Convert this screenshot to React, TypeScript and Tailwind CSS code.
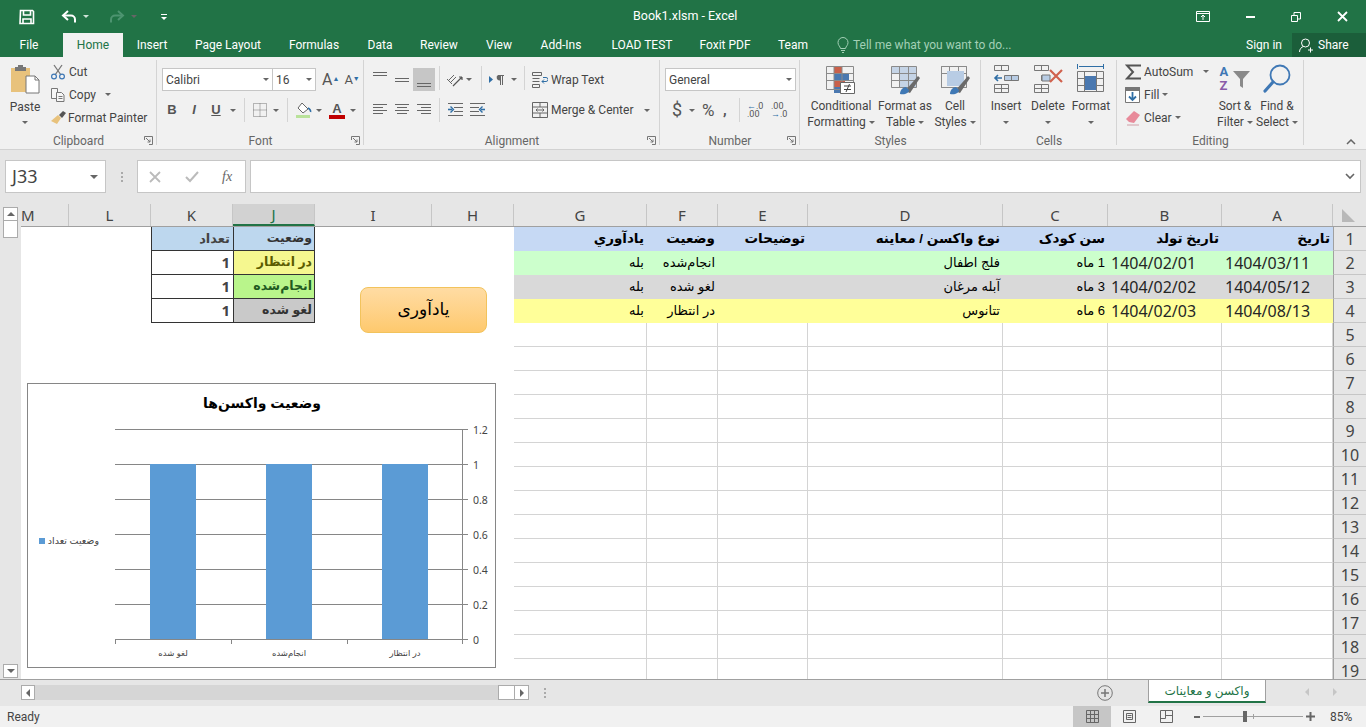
import React, { FC, ReactNode } from 'react'

const ui = { fontFamily: 'Roboto, "Noto Sans", sans-serif' }
const num = { fontFamily: '"Noto Sans", "Open Sans", sans-serif' }
const fa = { fontFamily: '"Liberation Sans", "DejaVu Sans", sans-serif' }

const Caret: FC<{ className?: string }> = ({ className = '' }) => (
  <span className={`inline-block h-0 w-0 border-x-[3px] border-t-[3px] border-x-transparent border-t-[#666] ${className}`} />
)

const Sep = () => <div className="mx-[4px] h-[24px] w-px bg-[#d4d4d4]" />

// title bar icons
const SaveIcon = () => (
  <svg width="16" height="16" viewBox="0 0 16 16" fill="none" stroke="#fff" strokeWidth="1.6">
    <path d="M1.5 1.5h12l1 1v12h-13.5z" />
    <path d="M4.5 2v4h7V2M4 14.5V10h8v4.5" />
  </svg>
)
const UndoIcon: FC<{ dim?: boolean }> = ({ dim }) => (
  <svg width="16" height="14" viewBox="0 0 16 14" fill="none" stroke={dim ? '#4d9470' : '#fff'} strokeWidth="2" className={dim ? '-scale-x-100' : ''}>
    <path d="M7 1 2 5.5 7 10" />
    <path d="M2.5 5.5H10a4 4 0 0 1 4 4v3" />
  </svg>
)

// ribbon small icons
const Lines: FC<{ rows: [number, number, number][] }> = ({ rows }) => (
  <svg width="16" height="16" viewBox="0 0 16 16" fill="none" stroke="#666" strokeWidth="1">
    {rows.map(([x, y, w], i) => (
      <path key={i} d={`M${x} ${y + 0.5}h${w}`} />
    ))}
  </svg>
)

const IndentIcon: FC<{ flip?: boolean }> = ({ flip }) => (
  <svg width="17" height="14" viewBox="0 0 17 14" fill="none" stroke="#666" className={flip ? '-scale-x-100' : ''}>
    <path d="M1 .5h15M7 4.5h9M7 8.5h9M1 12.5h15" />
    <path d="M1 6.5h4" stroke="#2f6ea5" strokeWidth="1.6" />
    <path d="m3.5 3.5 3 3-3 3" stroke="#2f6ea5" strokeWidth="1.4" />
  </svg>
)

const ScissorsIcon = () => (
  <svg width="16" height="16" viewBox="0 0 16 16" fill="none">
    <path d="M4 1 11 11M12 1 5 11" stroke="#777" strokeWidth="1.3" />
    <circle cx="4" cy="12.5" r="2.4" stroke="#3f78b5" strokeWidth="1.2" />
    <circle cx="12" cy="12.5" r="2.4" stroke="#3f78b5" strokeWidth="1.2" />
  </svg>
)
const CopyIcon = () => (
  <svg width="16" height="16" viewBox="0 0 16 16" fill="#f6f6f6" stroke="#777">
    <path d="M1.5 1.5h6v10h-6z" />
    <path d="M6.5 5.5h5l2.5 2.5v6.5h-7.5z" />
    <path d="M8.5 9.5h4M8.5 11.5h4" />
  </svg>
)
const BrushIcon = () => (
  <svg width="17" height="16" viewBox="0 0 17 16">
    <path d="M8 5 11 8 7 14 1 11z" fill="#e8c27c" />
    <path d="m9 5 4-4 3 2-4 5z" fill="#555" />
  </svg>
)
const PasteIcon = () => (
  <svg width="30" height="30" viewBox="0 0 30 30">
    <path d="M1 4h19v24H1z" fill="#e8c27c" />
    <path d="M5 3h11v4H5z" fill="#777" />
    <path d="M8 1h5v3H8z" fill="#777" />
    <path d="M16 12h9l4 4v13H16z" fill="#fff" stroke="#777" />
    <path d="M25 12v4h4" fill="none" stroke="#777" />
  </svg>
)
const BordersIcon = () => (
  <svg width="14" height="14" viewBox="0 0 14 14" fill="none" stroke="#777" strokeDasharray="1 1">
    <path d="M.5.5h13v13H.5zM7 .5v13M.5 7h13" />
  </svg>
)
const FillIcon = () => (
  <svg width="16" height="16" viewBox="0 0 16 16" fill="none">
    <path d="m6 1 6 6-5 4-5-5z" fill="#fff" stroke="#666" />
    <path d="M12 6c2 1 3 3 2.5 4" stroke="#2f6ea5" strokeWidth="1.6" />
    <path d="M0 13h14v3H0z" fill="#b9e29a" />
  </svg>
)
const OrientIcon = () => (
  <svg width="18" height="16" viewBox="0 0 18 16" fill="none" stroke="#666">
    <path d="M2 9l6-6M4 11l6-6M1 7l5 5" />
    <path d="M7 14 16 5M16 5h-3M16 5v3" stroke="#555" strokeWidth="1.2" />
  </svg>
)
const RtlIcon = () => (
  <svg width="16" height="12" viewBox="0 0 16 12">
    <path d="M0 2v7l4-3.5z" fill="#2f6ea5" />
    <path d="M9 1h6v1h-1v9h-1V2h-1v9h-1V6.500A3 3 0 0 1 9 1z" fill="#666" />
  </svg>
)
const WrapIcon = () => (
  <svg width="16" height="16" viewBox="0 0 16 16" fill="none" stroke="#666">
    <path d="M.5.5h9v3h-9zM.5 6.500h7M.5 9.500h7M.5 12.500h7v3h-7z" />
    <path d="M10 9.500h4a1.500 1.500 0 0 0 0-4H11" stroke="#2f6ea5" />
    <path d="m12 7.500-2 2 2 2" stroke="#2f6ea5" />
  </svg>
)
const MergeIcon = () => (
  <svg width="16" height="16" viewBox="0 0 16 16" fill="none" stroke="#666">
    <path d="M.5.5h15v15H.5zM.5 5h15M.5 11h15M4 8h8M5.500 6.500 4 8l1.500 1.500M10.500 6.500 12 8l-1.500 1.500M8 .5V5M8 11v4.500" />
  </svg>
)

// ribbon large icons
const Grid5: FC<{ fill?: ReactNode }> = ({ fill }) => (
  <g>
    {fill}
    <path d="M3.500 3.500h25v21h-25zM3.500 10.500h25M3.500 17.500h25M11.500 3.500v21M20.500 3.500v21" fill="none" stroke="#8a8a8a" />
  </g>
)
const PaintBrush = () => (
  <g>
    <path d="M17 28 30 13l2 2-10 15z" fill="#6a6a6a" />
    <path d="M12 31c0-4 3-7 6-7l3 3c0 3-4 5-9 4z" fill="#3f78b5" />
  </g>
)
const CondIcon = () => (
  <svg width="32" height="32" viewBox="0 0 32 32">
    <path d="M9 3h8v7H9z" fill="#c9604a" />
    <path d="M9 10h15v7H9z" fill="#4a78b0" />
    <path d="M9 17h11v7H9z" fill="#c9604a" />
    <path d="M9 24h6v6H9z" fill="#4a78b0" />
    <path d="M1.500 3.500h27v23h-27zM1.500 10.500h27M1.500 17.500h27M9 3.500v23M17 3.500v23" fill="none" stroke="#8a8a8a" />
    <path d="M15.500 19.500h14v11h-14z" fill="#fff" stroke="#666" />
    <path d="M19 23h7M19 26.500h7M24.500 21l-3.500 8" fill="none" stroke="#444" />
  </svg>
)
const TableIcon = () => (
  <svg width="34" height="32" viewBox="0 0 34 32">
    <Grid5 fill={<path d="M3.500 3.500h25v7h-25z M11.500 10.500h17v14h-17z" fill="#c5d4e6" />} />
    <PaintBrush />
  </svg>
)
const StylesIcon = () => (
  <svg width="34" height="32" viewBox="0 0 34 32">
    <path d="M3.500 3.500h25v21h-25zM3.500 10.500h25M11.500 3.500v7M20.500 3.500v7" fill="none" stroke="#8a8a8a" />
    <path d="M9 8h17v15H9z" fill="#b8cce4" />
    <path d="M3.500 3.500h25v21h-25z" fill="none" stroke="#8a8a8a" />
    <PaintBrush />
  </svg>
)
const InsertIcon = () => (
  <svg width="28" height="30" viewBox="0 0 28 30" fill="none" stroke="#777">
    <path d="M2.500 1.500h14v5h-14zM9.500 1.500v5M2.500 20.500h14v8h-14zM9.500 20.500v8M2.500 24.500h14" />
    <path d="M12.500 11.500h14v5h-14zM19.500 11.500v5" fill="#b8cce4" />
    <path d="M10 14H3M6 11l-3 3 3 3" stroke="#2f6ea5" strokeWidth="1.6" />
  </svg>
)
const DeleteIcon = () => (
  <svg width="32" height="30" viewBox="0 0 32 30" fill="none" stroke="#777">
    <path d="M2.500 1.500h14v5h-14zM9.500 1.500v5M2.500 20.500h14v8h-14zM9.500 20.500v8M2.500 24.500h14M9.500 11.500h8v5h-8z" />
    <path d="M10 11h8v6h-8z" fill="#b8cce4" />
    <path d="m18 6 12 12M30 6 18 18" stroke="#d0614d" strokeWidth="2.2" />
  </svg>
)
const FormatIcon = () => (
  <svg width="30" height="32" viewBox="0 0 30 32" fill="none" stroke="#777">
    <path d="M1.500 1v5M27.500 1v5M3 3.500h24" stroke="#2f6ea5" />
    <path d="M1.500 8.500h26v20h-26zM8.500 8.500v20M20.500 8.500v20M1.500 15.500h26M1.500 22.500h26" />
    <path d="M9 13h11v14H9z" fill="#4a78b0" stroke="none" />
  </svg>
)
const SigmaIcon = () => (
  <svg width="16" height="16" viewBox="0 0 16 16" fill="none" stroke="#555" strokeWidth="2">
    <path d="M15 2.500V1.500H2l6 6.500-6 6.500h13v-1" />
  </svg>
)
const FillDownIcon = () => (
  <svg width="16" height="16" viewBox="0 0 16 16" fill="none">
    <path d="M.5.5h14v15H.5z" fill="#fff" stroke="#777" />
    <path d="M.5.5h14v3H.5z" fill="#777" stroke="#777" />
    <path d="M7.500 5v8M4 9.500l3.500 3.500L11 9.500" stroke="#2f6ea5" strokeWidth="1.8" />
  </svg>
)
const EraserIcon = () => (
  <svg width="16" height="16" viewBox="0 0 16 16">
    <path d="m9 1 6 4-6 8-5-1-3-3z" fill="#e88a9a" />
    <path d="M2 15h12" stroke="#d0a0a8" />
  </svg>
)
const SortFilterIcon = () => (
  <div className="flex items-center">
    <div className="flex w-[12px] flex-col text-[13px] leading-[14px] font-bold">
      <span className="text-[#3f78b5]">A</span>
      <span className="text-[#8a5ca8]">Z</span>
    </div>
    <svg width="19" height="20" viewBox="0 0 19 20"><path d="M1 2h17l-7 8v9l-3-2v-7z" fill="#8a8a8a" /></svg>
  </div>
)
const SearchIcon = () => (
  <svg width="32" height="32" viewBox="0 0 32 32" fill="none">
    <circle cx="19" cy="12" r="9.500" stroke="#3f78b5" strokeWidth="1.8" />
    <path d="m12 19-8 9" stroke="#3f78b5" strokeWidth="3.2" strokeLinecap="round" />
  </svg>
)

const Launcher = () => (
  <svg width="9" height="9" viewBox="0 0 9 9" fill="none" stroke="#777" className="absolute right-[4px] bottom-[4px]">
    <path d="M.5 4V.5H8.500V8.500H5" />
    <path d="M2 2l4 4M3.500 6H6V3.500" />
  </svg>
)

const Group: FC<{ className: string; label: string; launcher?: boolean; children: ReactNode }> = ({ className, label, launcher, children }) => (
  <div className={`relative mt-[3px] flex h-[89px] shrink-0 flex-col ${className}`}>
    <div className="flex-1">{children}</div>
    <div className="text-center text-[12px] leading-[16px] text-[#666]">{label}</div>
    {launcher && <Launcher />}
    <span className="absolute top-0 right-0 h-[85px] w-px bg-[#d4d4d4]" />
  </div>
)

const BigBtn: FC<{ className: string; icon: ReactNode; top: string; bottom: string; caret?: boolean }> = ({ className, icon, top, bottom, caret = true }) => (
  <div className={`flex flex-col items-center text-[12px] leading-[16px] text-[#444] ${className}`}>
    <div className="flex h-[38px] items-center justify-center">{icon}</div>
    <span className="whitespace-nowrap">{top}</span>
    <span className="flex h-[16px] items-center gap-[3px] whitespace-nowrap">
      {bottom}
      {caret && <Caret />}
    </span>
  </div>
)

const Ribbon = () => (
  <div className="flex h-[93px] shrink-0 border-b border-[#d2d2d2] bg-[#f1f1f1]">
    <Group className="w-[157px]" label="Clipboard" launcher>
      <div className="flex">
        <div className="flex w-[50px] flex-col items-center text-[12px] text-[#444]">
          <div className="mt-[4px] h-[30px]"><PasteIcon /></div>
          <span className="mt-[5px] leading-[16px]">Paste</span>
          <Caret className="mt-[6px]" />
        </div>
        <div className="flex flex-col text-[12px] text-[#444]">
          <div className="flex h-[23px] items-center gap-[3px]"><ScissorsIcon />Cut</div>
          <div className="flex h-[23px] items-center gap-[3px]"><CopyIcon />Copy<Caret className="ml-[6px]" /></div>
          <div className="flex h-[23px] items-center gap-[1px] whitespace-nowrap"><BrushIcon />Format Painter</div>
        </div>
      </div>
    </Group>

    <Group className="w-[207px]" label="Font" launcher>
      <div className="flex items-center pt-[8px] pl-[5px]">
        <div className="flex h-[23px] w-[111px] items-center justify-between border border-[#c6c6c6] bg-white px-[3px] text-[12px] text-[#444]">Calibri<Caret /></div>
        <div className="flex h-[23px] w-[43px] items-center justify-between border border-l-0 border-[#c6c6c6] bg-white px-[3px] text-[12px] text-[#444]">16<Caret /></div>
        <span className="ml-[6px] text-[16px] leading-none text-[#555]">A<sup className="text-[7px] text-[#2f6ea5]">▲</sup></span>
        <span className="ml-[5px] text-[13px] leading-none text-[#555]">A<sup className="text-[7px] text-[#2f6ea5]">▼</sup></span>
      </div>
      <div className="mt-[8px] flex h-[22px] items-center pl-[4px] text-[13px] text-[#555]">
        <span className="w-[22px] text-center font-bold" style={fa}>B</span>
        <span className="w-[22px] text-center font-bold italic" style={fa}>I</span>
        <span className="w-[22px] text-center font-bold underline" style={fa}>U</span>
        <Caret className="mr-[4px] ml-[3px]" />
        <Sep />
        <span className="ml-[4px] flex w-[20px]"><BordersIcon /></span>
        <Caret className="mr-[4px]" />
        <Sep />
        <span className="ml-[4px] w-[20px]"><FillIcon /></span>
        <Caret />
        <span className="ml-[5px] flex w-[20px] flex-col items-center font-bold leading-[13px]" style={fa}>A<span className="h-[4px] w-[16px] bg-[#c00000]" /></span>
        <Caret className="ml-[3px]" />
      </div>
    </Group>

    <Group className="w-[296px]" label="Alignment" launcher>
      <div className="flex">
        <div className="flex w-[165px] shrink-0 flex-col">
          <div className="flex h-[31px] items-end pl-[5px]">
            <span className="flex h-[23px] w-[22px] items-start justify-center pt-[3px]"><Lines rows={[[1, 1, 14], [1, 4, 14]]} /></span>
            <span className="flex h-[23px] w-[22px] items-center justify-center"><Lines rows={[[1, 6, 14], [1, 9, 14]]} /></span>
            <span className="flex h-[23px] w-[22px] items-end justify-center bg-[#c6c6c6] pb-[2px]"><Lines rows={[[1, 10, 14], [1, 13, 14]]} /></span>
            <div className="mb-[1px]"><Sep /></div>
            <span className="ml-[2px] flex h-[23px] w-[20px] items-center"><OrientIcon /></span>
            <Caret className="mb-[10px]" />
            <div className="mb-[1px] ml-[5px]"><Sep /></div>
            <span className="ml-[3px] flex h-[23px] w-[22px] items-center"><RtlIcon /></span>
            <Caret className="mb-[10px]" />
            <div className="mb-[1px] ml-[3px]"><Sep /></div>
          </div>
          <div className="mt-[8px] flex h-[22px] items-center pl-[5px]">
            <span className="flex w-[22px] justify-center"><Lines rows={[[1, 2, 14], [1, 5, 10], [1, 8, 14], [1, 11, 10]]} /></span>
            <span className="flex w-[22px] justify-center"><Lines rows={[[1, 2, 14], [3, 5, 10], [1, 8, 14], [3, 11, 10]]} /></span>
            <span className="flex w-[22px] justify-center"><Lines rows={[[1, 2, 14], [5, 5, 10], [1, 8, 14], [5, 11, 10]]} /></span>
            <Sep />
            <span className="ml-[3px] flex w-[22px]"><IndentIcon /></span>
            <IndentIcon flip />
          </div>
        </div>
        <div className="flex flex-col pl-[3px] text-[12px] text-[#444]">
          <div className="mt-[8px] flex h-[23px] items-center gap-[3px] whitespace-nowrap"><WrapIcon />Wrap Text</div>
          <div className="mt-[8px] flex h-[22px] items-center gap-[3px] whitespace-nowrap"><MergeIcon />Merge &amp; Center<Caret className="ml-[8px]" /></div>
        </div>
      </div>
    </Group>

    <Group className="w-[140px]" label="Number" launcher>
      <div className="pt-[8px] pl-[5px]">
        <div className="flex h-[23px] w-[131px] items-center justify-between border border-[#c6c6c6] bg-white px-[3px] text-[12px] text-[#444]">General<Caret /></div>
      </div>
      <div className="mt-[8px] flex h-[22px] items-center pl-[12px] text-[#555]">
        <span className="w-[10px] text-[18px] leading-none">$</span>
        <Caret className="ml-[7px]" />
        <span className="ml-[7px] w-[15px] text-[17px] leading-none">%</span>
        <span className="ml-[6px] w-[6px] text-[15px] leading-none font-bold">,</span>
        <div className="ml-[6px]"><Sep /></div>
        <span className="ml-[3px] w-[24px] text-[9px] leading-[8px]"><span className="text-[#2f6ea5]">←</span>.0<br />.00</span>
        <span className="w-[20px] text-[9px] leading-[8px]">.00<br /><span className="text-[#2f6ea5]">→</span>.0</span>
      </div>
    </Group>

    <Group className="w-[181px]" label="Styles">
      <div className="flex">
        <BigBtn className="w-[81px] pl-[1px]" icon={<CondIcon />} top="Conditional" bottom="Formatting" />
        <BigBtn className="w-[48px]" icon={<TableIcon />} top="Format as" bottom="Table" />
        <BigBtn className="w-[52px]" icon={<StylesIcon />} top="Cell" bottom="Styles" />
      </div>
    </Group>

    <Group className="w-[136px]" label="Cells">
      <div className="flex pl-[4px]">
        <BigBtn className="w-[42px]" icon={<InsertIcon />} top="Insert" bottom="" />
        <BigBtn className="w-[42px]" icon={<DeleteIcon />} top="Delete" bottom="" />
        <BigBtn className="w-[44px]" icon={<FormatIcon />} top="Format" bottom="" />
      </div>
    </Group>

    <Group className="w-[187px]" label="Editing">
      <div className="flex pl-[8px]">
        <div className="flex w-[89px] flex-col text-[12px] text-[#444]">
          <div className="flex h-[23px] items-center gap-[3px]"><SigmaIcon />AutoSum<Caret className="ml-[7px]" /></div>
          <div className="flex h-[23px] items-center gap-[3px]"><FillDownIcon />Fill<Caret /></div>
          <div className="flex h-[23px] items-center gap-[3px]"><EraserIcon />Clear<Caret /></div>
        </div>
        <BigBtn className="w-[42px]" icon={<SortFilterIcon />} top="Sort &" bottom="Filter" />
        <BigBtn className="w-[42px]" icon={<SearchIcon />} top="Find &" bottom="Select" />
      </div>
    </Group>

    <div className="flex flex-1 items-end justify-end pr-[10px] pb-[4px]">
      <svg width="10" height="6" viewBox="0 0 10 6" fill="none" stroke="#666" strokeWidth="1.5"><path d="m1 5 4-4 4 4" /></svg>
    </div>
  </div>
)

const tabs: [string, string][] = [
  ['File', 'w-[63px] pr-[5px]'],
  ['Home', 'w-[60px]'],
  ['Insert', 'w-[58px]'],
  ['Page Layout', 'w-[94px]'],
  ['Formulas', 'w-[78px]'],
  ['Data', 'w-[54px]'],
  ['Review', 'w-[64px]'],
  ['View', 'w-[56px]'],
  ['Add-Ins', 'w-[68px]'],
  ['LOAD TEST', 'w-[94px]'],
  ['Foxit PDF', 'w-[72px]'],
  ['Team', 'w-[64px]'],
]

const TitleBar = () => (
  <div className="shrink-0 bg-[#217346] text-white">
    <div className="flex h-[33px] items-center">
      <div className="flex w-[633px] items-center pl-[19px]">
        <SaveIcon />
        <span className="ml-[26px]"><UndoIcon /></span>
        <Caret className="ml-[6px] border-t-[#cfe3d8]" />
        <span className="ml-[20px]"><UndoIcon dim /></span>
        <Caret className="ml-[6px] border-t-[#4d9470]" />
        <span className="ml-[24px] flex flex-col items-center gap-[2px]">
          <span className="h-[1px] w-[6px] bg-white" />
          <Caret className="border-t-white" />
        </span>
      </div>
      <span className="text-[12.5px]">Book1.xlsm - Excel</span>
      <div className="ml-auto flex items-center">
        <svg width="14" height="12" viewBox="0 0 14 12" fill="none" stroke="#fff" className="mr-[36px]"><path d="M.5.5h13v10H.5zM.5 2.500h13M7 9V4M5 6l2-2 2 2" /></svg>
        <span className="mr-[36px] h-[2px] w-[9px] bg-white" />
        <svg width="10" height="10" viewBox="0 0 10 10" fill="none" stroke="#fff" className="mr-[36px]"><path d="M.5 3.500h6v6h-6zM3 3V.5h6.500V7H7" /></svg>
        <svg width="11" height="11" viewBox="0 0 11 11" fill="none" stroke="#fff" strokeWidth="1.8" className="mr-[18px]"><path d="m1 1 9 9M10 1l-9 9" /></svg>
      </div>
    </div>
    <div className="flex h-[24px] items-stretch text-[12px]">
      {tabs.map(([name, w]) => (
        <div key={name} className={`flex items-center justify-center ${w} ${name === 'Home' ? 'bg-[#f1f1f1] text-[#217346]' : ''}`}>{name}</div>
      ))}
      <div className="ml-[11px] flex items-center gap-[3px] text-[#a3d0b6]">
        <svg width="14" height="16" viewBox="0 0 14 16" fill="none" stroke="#a3d0b6"><path d="M4.500 11.500C4 9 2 8.500 2 5.500a5 5 0 0 1 10 0c0 3-2 3.500-2.500 6zM5 13.500h4M6 15.500h2" /></svg>
        Tell me what you want to do...
      </div>
      <div className="ml-auto flex items-center pr-[10px]">Sign in</div>
      <div className="flex w-[74px] items-center gap-[5px] bg-[#1b5e3a] pl-[7px]">
        <svg width="14" height="15" viewBox="0 0 14 15" fill="none" stroke="#fff"><circle cx="6.500" cy="5" r="4" /><path d="M.5 14c0-3 2-5 4-5.500M9 12h5M11.500 9.500v5" /></svg>
        Share
      </div>
    </div>
  </div>
)

const FormulaBar = () => (
  <div className="flex h-[54px] shrink-0 items-start bg-[#e6e6e6] pt-[10px]">
    <div className="ml-[5px] flex h-[33px] w-[101px] items-center justify-between border border-[#c6c6c6] bg-white pr-[7px] pl-[6px] text-[18px] text-[#444]" style={num}>J33<Caret className="border-x-[4px] border-t-[4px]" /></div>
    <div className="ml-[15px] flex h-[33px] w-[2px] flex-col items-center justify-center gap-[2px]">
      <span className="h-[2px] w-[2px] bg-[#aaa]" />
      <span className="h-[2px] w-[2px] bg-[#aaa]" />
      <span className="h-[2px] w-[2px] bg-[#aaa]" />
    </div>
    <div className="ml-[14px] flex h-[33px] w-[109px] items-center border border-[#c6c6c6] bg-white pl-[11px] text-[#aaa]">
      <svg width="12" height="12" viewBox="0 0 12 12" fill="none" stroke="#bbb" strokeWidth="1.8"><path d="m1 1 10 10M11 1 1 11" /></svg>
      <svg width="14" height="12" viewBox="0 0 14 12" fill="none" stroke="#bbb" strokeWidth="2" className="ml-[24px]"><path d="m1 6 4 4 8-9" /></svg>
      <span className="ml-[23px] text-[14px] text-[#666] italic" style={{ fontFamily: '"Liberation Serif", serif' }}>fx</span>
    </div>
    <div className="ml-[4px] flex h-[33px] w-[1111px] items-center justify-end border border-[#c6c6c6] bg-white pr-[5px]">
      <svg width="10" height="7" viewBox="0 0 10 7" fill="none" stroke="#666" strokeWidth="1.6"><path d="m1 1 4 4 4-4" /></svg>
    </div>
  </div>
)

const columnLetters = ['M', 'L', 'K', 'J', 'I', 'H', 'G', 'F', 'E', 'D', 'C', 'B', 'A']
const gridCols = 'grid grid-cols-[48px_82px_82px_82px_117px_82px_133px_71px_90px_195px_105px_114px_111px_33px]'

// G F E D C B A, from the left
const rowsData: { bg: string; bold?: boolean; cells: string[] }[] = [
  { bg: 'bg-[#c6d9f4]', bold: true, cells: ['يادآوري', 'وضعیت', 'توضیحات', 'نوع واکسن / معاینه', 'سن کودک', 'تاریخ تولد', 'تاریخ'] },
  { bg: 'bg-[#ccffcc]', cells: ['بله', 'انجام‌شده', '', 'فلج اطفال', '1 ماه', '1404/02/01', '1404/03/11'] },
  { bg: 'bg-[#d9d9d9]', cells: ['بله', 'لغو شده', '', 'آبله مرغان', '3 ماه', '1404/02/02', '1404/05/12'] },
  { bg: 'bg-[#ffff99]', cells: ['بله', 'در انتظار', '', 'تتانوس', '6 ماه', '1404/02/03', '1404/08/13'] },
]

const sideTable: { k: string; j: string; kBg: string; jBg: string }[] = [
  { k: 'تعداد', j: 'وضعیت', kBg: 'bg-[#bdd7ee]', jBg: 'bg-[#bdd7ee] text-[#333]' },
  { k: '1', j: 'در انتظار', kBg: 'bg-white', jBg: 'bg-[#f5f78f] text-[#5c5c00]' },
  { k: '1', j: 'انجام‌شده', kBg: 'bg-white', jBg: 'bg-[#b9f58b] text-[#1f5a1f]' },
  { k: '1', j: 'لغو شده', kBg: 'bg-white', jBg: 'bg-[#c9c9c9] text-[#333]' },
]

const isDate = (s: string) => s.startsWith('1404')

const Sheet = () => (
  <div className={`${gridCols} auto-rows-[24px]`}>
    {Array.from({ length: 19 }).map((_, r) => {
      const data = rowsData[r]
      const side = sideTable[r]
      return (
        <React.Fragment key={r}>
          <div className="bg-white" />
          <div className="bg-white" />
          {side ? (
            <>
              <div className={`flex items-center justify-end border-b border-l border-[#333] pr-[3px] text-[13px] font-bold text-[#444] ${side.kBg}`} style={r === 0 ? fa : { ...num, fontSize: 15 }}>{side.k}</div>
              <div className={`flex items-center justify-start whitespace-nowrap border-x border-b border-[#333] pr-[2px] text-[12.5px] font-bold ${side.jBg}`} style={fa} dir="rtl">{side.j}</div>
            </>
          ) : (
            <>
              <div className="bg-white" />
              <div className="bg-white" />
            </>
          )}
          <div className="bg-white" />
          <div className="bg-white" />
          {data
            ? data.cells.map((text, c) => (
                <div
                  key={c}
                  dir={isDate(text) ? 'ltr' : 'rtl'}
                  style={isDate(text) ? { ...num, fontSize: 16 } : fa}
                  className={`flex items-center whitespace-nowrap px-[3px] ${isDate(text) ? 'text-[#262626]' : 'text-black'} ${data.bg} ${data.bold ? 'text-[13.5px] font-bold' : 'text-[13px]'}`}
                >
                  {text}
                </div>
              ))
            : Array.from({ length: 7 }).map((_, c) => <div key={c} className="border-r border-b border-[#d4d4d4] bg-white" />)}
          <div className="flex items-center justify-center border-b border-l border-[#c6c6c6] border-l-[#a0a0a0] bg-[#e6e6e6] text-[16px] text-[#444]" style={num}>{r + 1}</div>
        </React.Fragment>
      )
    })}
  </div>
)

const Chart = () => {
  const ticks = ['1.2', '1', '0.8', '0.6', '0.4', '0.2', '0']
  const bars: [number, string][] = [[150, 'لغو شده'], [266, 'انجام‌شده'], [382, 'در انتظار']]
  return (
    <div className="absolute top-[156px] left-[6px] h-[285px] w-[469px] border border-[#868686] bg-white">
      <svg width="467" height="283" viewBox="28 384 467 283" style={fa}>
        <text x="262" y="408" fontSize="14" fontWeight="700" textAnchor="middle" direction="rtl" fill="#000">وضعیت واکسن‌ها</text>
        {ticks.map((t, i) => (
          <g key={t}>
            <path d={`M115 ${429.5 + i * 35}h353`} stroke="#868686" />
            <text x="473" y={433.5 + i * 35} fontSize="10.5" fill="#444" style={num}>{t}</text>
          </g>
        ))}
        <path d="M462.500 429v210M115.500 639v5M231.500 639v5M347.500 639v5M462.500 639v5" stroke="#868686" />
        {bars.map(([x, name]) => (
          <g key={x}>
            <rect x={x} y="464" width="46" height="175" fill="#5b9bd5" />
            <text x={x + 23} y="656" fontSize="8.5" textAnchor="middle" direction="rtl" fill="#444">{name}</text>
          </g>
        ))}
        <rect x="39" y="538" width="6" height="6" fill="#5b9bd5" />
        <text x="99" y="544" fontSize="9.5" textAnchor="start" direction="rtl" fill="#444">وضعیت تعداد</text>
      </svg>
    </div>
  )
}

const ScrollBtn: FC<{ children: ReactNode; className?: string }> = ({ children, className = '' }) => (
  <div className={`flex items-center justify-center border border-[#ababab] bg-white ${className}`}>{children}</div>
)

const Tri: FC<{ d: 'u' | 'd' | 'l' | 'r'; c?: string }> = ({ d, c = '#666' }) => {
  const p = { u: 'M0 6 4 2l4 4z', d: 'M0 2l4 4 4-4z', l: 'M6 0 2 4l4 4z', r: 'M2 0l4 4-4 4z' }[d]
  return <svg width="8" height="8" viewBox="0 0 8 8" fill={c}><path d={p} /></svg>
}

const Workspace = () => (
  <div className="flex min-h-0 flex-1">
    <div className="flex w-[21px] shrink-0 flex-col items-center bg-[#e6e6e6] px-[3px] pt-[3px] pb-[1px]">
      <ScrollBtn className="h-[14px] w-[15px]"><Tri d="u" /></ScrollBtn>
      <div className="h-[17px] w-[15px] border border-t-0 border-[#ababab] bg-white" />
      <div className="flex-1" />
      <ScrollBtn className="h-[14px] w-[15px]"><Tri d="d" /></ScrollBtn>
    </div>
    <div className="flex min-w-0 flex-1 flex-col">
      <div className={`${gridCols} h-[23px] shrink-0 border-b border-[#a0a0a0] bg-[#e6e6e6]`} style={num}>
        {columnLetters.map(l => (
          <div
            key={l}
            className={`flex items-center justify-center border-r border-[#c6c6c6] text-[15px] leading-none ${l === 'J' ? 'border-b-2 border-b-[#217346] bg-[#d2d2d2] text-[#217346]' : 'text-[#444]'} ${l === 'M' ? 'justify-start' : ''}`}
          >
            {l}
          </div>
        ))}
        <div className="flex items-end justify-center pr-[4px] pb-[3px]">
          <svg width="16" height="16" viewBox="0 0 16 16"><path d="M2 2v13h13z" fill="#b8b8b8" /></svg>
        </div>
      </div>
      <div className="relative min-h-0 flex-1 overflow-hidden bg-white">
        <Sheet />
        <div className="absolute top-[60px] left-[339px] flex h-[46px] w-[127px] items-center justify-center rounded-[8px] border border-[#f2c35c] bg-gradient-to-b from-[#ffdca3] to-[#fec96d] text-[17px] text-black" style={fa} dir="rtl">یادآوری</div>
        <Chart />
      </div>
    </div>
  </div>
)

const SheetTabs = () => (
  <div className="flex h-[27px] shrink-0 border-t border-[#a0a0a0] bg-[#e6e6e6]">
    <div className="flex w-[1148px] items-start pt-[5px] pl-[21px]">
      <ScrollBtn className="h-[15px] w-[14px]"><Tri d="l" /></ScrollBtn>
      <div className="h-[15px] w-[463px] bg-[#d6d6d6]" />
      <div className="h-[15px] w-[17px] border border-[#ababab] bg-white" />
      <ScrollBtn className="h-[15px] w-[14px] border-l-0"><Tri d="r" /></ScrollBtn>
      <div className="ml-[15px] flex h-[15px] flex-col justify-center gap-[2px]">
        <span className="h-[2px] w-[2px] bg-[#aaa]" />
        <span className="h-[2px] w-[2px] bg-[#aaa]" />
        <span className="h-[2px] w-[2px] bg-[#aaa]" />
      </div>
      <svg width="16" height="16" viewBox="0 0 16 16" fill="none" stroke="#777" className="ml-[551px]"><circle cx="8" cy="8" r="7.3" /><path d="M4 8h8M8 4v8" strokeWidth="1.5" /></svg>
    </div>
    <div className="flex h-[23px] w-[118px] items-center justify-center whitespace-nowrap border-x border-b-2 border-[#a0a0a0] border-b-[#217346] bg-white text-[12px] font-medium text-[#217346]" style={fa} dir="rtl">واکسن و معاینات</div>
    <div className="flex flex-1 items-start pt-[8px] pl-[37px]">
      <Tri d="l" c="#c6c6c6" />
      <span className="ml-[20px]"><Tri d="r" c="#c6c6c6" /></span>
    </div>
  </div>
)

const StatusBar = () => (
  <div className="flex h-[21px] shrink-0 items-center bg-[#f1f1f1] pl-[7px] text-[12px] text-[#444]">
    Ready
    <div className="ml-auto flex h-full items-center">
      <div className="flex h-full w-[38px] items-center justify-center bg-[#c6c6c6]">
        <svg width="13" height="13" viewBox="0 0 13 13" fill="none" stroke="#666"><path d="M.5.5h12v12H.5zM4.500.5v12M8.500.5v12M.5 4.500h12M.5 8.500h12" /></svg>
      </div>
      <svg width="13" height="13" viewBox="0 0 13 13" fill="none" stroke="#666" className="ml-[12px]"><path d="M.5.5h12v12H.5zM3.500 3.500h6v6h-6zM4.500 5.500h4M4.500 7.500h4" /></svg>
      <svg width="13" height="13" viewBox="0 0 13 13" fill="none" stroke="#666" className="ml-[24px]"><path d="M.5.5h12v12H.5zM.5 8.500h5v-8M5.500 5.500h7" /></svg>
      <span className="ml-[21px] h-[2px] w-[6px] bg-[#666]" />
      <div className="relative ml-[3px] h-[1px] w-[100px] bg-[#a0a0a0]">
        <span className="absolute -top-[5px] left-[40px] h-[11px] w-[4px] bg-[#666]" />
        <span className="absolute -top-[2px] left-[50px] h-[5px] w-[1px] bg-[#a0a0a0]" />
      </div>
      <svg width="9" height="9" viewBox="0 0 9 9" stroke="#666" strokeWidth="2" className="ml-[3px]"><path d="M0 4.500h9M4.500 0v9" /></svg>
      <span className="ml-[15px] w-[36px]">85%</span>
    </div>
  </div>
)

const App: FC = () => {
  return (
    <div className="flex h-[727px] w-[1366px] flex-col overflow-hidden bg-[#e6e6e6]" style={ui}>
      <TitleBar />
      <Ribbon />
      <FormulaBar />
      <Workspace />
      <SheetTabs />
      <StatusBar />
    </div>
  )
}

export default App
